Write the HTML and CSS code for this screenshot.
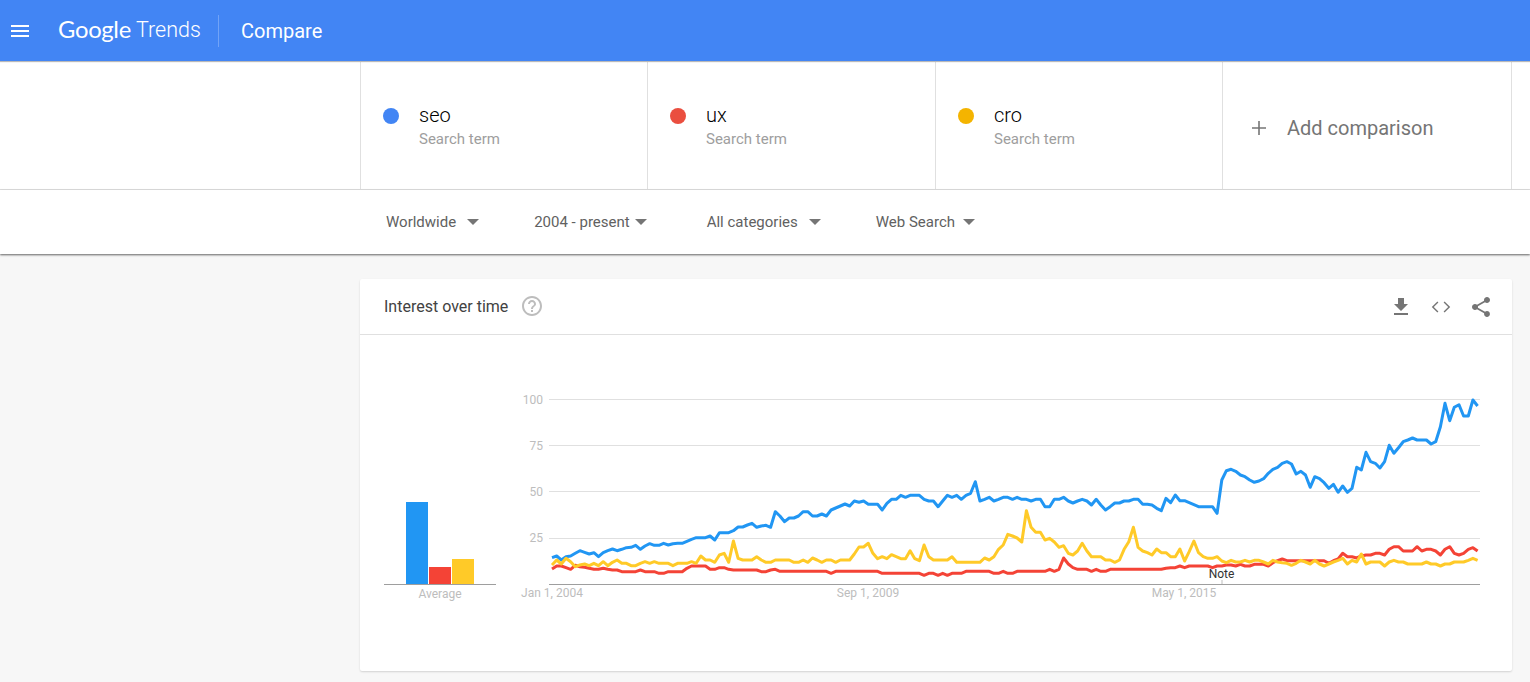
FILE: index.html
```html
<!DOCTYPE html>
<html lang="en">
<head>
<meta charset="utf-8">
<title>Google Trends - Compare</title>
<link rel="stylesheet" href="styles.css">
</head>
<body>
<header class="topbar">
  <button class="menu-btn" aria-label="Menu"><span></span><span></span><span></span></button>
  <div class="logo"><span class="logo-google">Google</span><span class="logo-trends">Trends</span></div>
  <div class="topbar-title">Compare</div>
</header>

<section class="terms">
  <div class="term">
    <span class="dot dot-blue"></span>
    <div class="term-text"><div class="term-name">seo</div><div class="term-kind">Search term</div></div>
  </div>
  <div class="term">
    <span class="dot dot-red"></span>
    <div class="term-text"><div class="term-name">ux</div><div class="term-kind">Search term</div></div>
  </div>
  <div class="term">
    <span class="dot dot-yellow"></span>
    <div class="term-text"><div class="term-name">cro</div><div class="term-kind">Search term</div></div>
  </div>
  <div class="term term-add">
    <svg class="plus" viewBox="0 0 14 14"><path d="M6.2 0h1.6v6.2H14v1.6H7.8V14H6.2V7.8H0V6.2h6.2z"/></svg>
    <span class="add-label">Add comparison</span>
  </div>
</section>

<section class="filters">
  <div class="filter f-geo">Worldwide<i class="caret"></i></div>
  <div class="filter f-time">2004 - present<i class="caret"></i></div>
  <div class="filter f-cat">All categories<i class="caret"></i></div>
  <div class="filter f-prop">Web Search<i class="caret"></i></div>
</section>

<main class="content">
  <article class="card">
    <div class="card-head">
      <h2 class="card-title">Interest over time</h2>
      <svg class="help" viewBox="0 0 24 24"><path d="M11 18h2v-2h-2v2zm1-16C6.48 2 2 6.48 2 12s4.48 10 10 10 10-4.48 10-10S17.52 2 12 2zm0 18c-4.41 0-8-3.59-8-8s3.59-8 8-8 8 3.59 8 8-3.59 8-8 8zm0-14c-2.21 0-4 1.79-4 4h2c0-1.1.9-2 2-2s2 .9 2 2c0 2-3 1.75-3 5h2c0-2.25 3-2.5 3-5 0-2.21-1.79-4-4-4z"/></svg>
      <div class="card-actions">
        <svg class="action" viewBox="0 0 24 24"><path d="M19 9h-4V3H9v6H5l7 7 7-7zM5 18v2h14v-2H5z"/></svg>
        <svg class="action" viewBox="0 0 24 24"><path d="M9.4 16.6L4.8 12l4.6-4.6L8.4 6.4 2.8 12l5.6 5.6 1-1zm5.2 0l4.6-4.6-4.6-4.6 1-1 5.6 5.6-5.6 5.6-1-1z"/></svg>
        <svg class="action" viewBox="0 0 24 24"><path d="M18 16.08c-.76 0-1.44.3-1.96.77L8.91 12.7c.05-.23.09-.46.09-.7s-.04-.47-.09-.7l7.05-4.11c.54.5 1.25.81 2.04.81 1.66 0 3-1.34 3-3s-1.34-3-3-3-3 1.34-3 3c0 .24.04.47.09.7L8.04 9.81C7.5 9.31 6.79 9 6 9c-1.66 0-3 1.34-3 3s1.34 3 3 3c.79 0 1.5-.31 2.04-.81l7.12 4.16c-.05.21-.08.43-.08.65 0 1.61 1.31 2.92 2.92 2.92 1.61 0 2.92-1.31 2.92-2.92s-1.31-2.92-2.92-2.92z"/></svg>
      </div>
    </div>
    <svg class="chart" viewBox="360 335 1152 336" width="1152" height="336">
      <rect class="bar-blue" x="406" y="502" width="22" height="82"/>
      <rect class="bar-red" x="429" y="567" width="22" height="17"/>
      <rect class="bar-yellow" x="452" y="559" width="22" height="25"/>
      <line class="axis" x1="384" y1="584.5" x2="496" y2="584.5"/>
      <text class="tick tick-mid" x="440" y="598">Average</text>

      <line class="grid" x1="549" y1="399.5" x2="1480" y2="399.5"/>
      <line class="grid" x1="549" y1="445.5" x2="1480" y2="445.5"/>
      <line class="grid" x1="549" y1="491.5" x2="1480" y2="491.5"/>
      <line class="grid" x1="549" y1="538.5" x2="1480" y2="538.5"/>
      <line class="axis" x1="549" y1="584.5" x2="1480" y2="584.5"/>
      <text class="tick tick-end" x="543" y="404">100</text>
      <text class="tick tick-end" x="543" y="450">75</text>
      <text class="tick tick-end" x="543" y="496">50</text>
      <text class="tick tick-end" x="543" y="542">25</text>
      <text class="tick tick-mid" x="552" y="597">Jan 1, 2004</text>
      <text class="tick tick-mid" x="868" y="597">Sep 1, 2009</text>
      <text class="tick tick-mid" x="1184" y="597">May 1, 2015</text>

      <polyline id="line-seo" class="line line-blue"/>
      <polyline id="line-ux" class="line line-red"/>
      <polyline id="line-cro" class="line line-yellow"/>

      <line class="note-tick" x1="1222" y1="580" x2="1222" y2="584"/>
      <text class="note" x="1221.5" y="578">Note</text>
    </svg>
  </article>
</main>
<script src="chart.js"></script>
</body>
</html>
```
FILE: styles.css
```css
* { box-sizing: border-box; }
html, body { margin: 0; height: 100%; overflow: hidden; }
body { background: #f7f7f7; font-family: Roboto, "Liberation Sans", sans-serif; color: #212121; }

.topbar { height: 61px; background: #4285f4; display: flex; align-items: center; color: #fff; position: relative; z-index: 2; box-shadow: 0 1px 1px rgba(0,0,0,.25); }
.menu-btn { width: 18px; height: 12px; margin-left: 11px; padding: 0; border: 0; background: none; display: flex; flex-direction: column; justify-content: space-between; }
.menu-btn span { display: block; height: 2px; background: #fff; }
.logo { margin-left: 29px; width: 161px; height: 32px; display: flex; align-items: center; border-right: 1px solid rgba(255,255,255,.25); padding-bottom: 3px; }
.logo-google { font: 400 23.8px Lato, Roboto, sans-serif; letter-spacing: -.3px; }
.logo-trends { font: 300 21.5px Roboto, sans-serif; margin-left: 5px; }
.topbar-title { margin-left: 22px; font-size: 20px; }

.terms { height: 128px; background: #fff; border-bottom: 1px solid #e0e0e0; padding-left: 360px; display: grid; grid-template-columns: 287px 288px 287px 290px; margin-top: 1px; }
.term { border-left: 1px solid #e0e0e0; display: flex; align-items: center; padding-left: 22px; }
.term:last-child { border-right: 1px solid #e0e0e0; }
.term-add { padding-left: 29px; padding-top: 4px; }
.dot { width: 16px; height: 16px; border-radius: 50%; margin-right: 20px; margin-top: -20px; flex: none; }
.dot-blue { background: #4285f4; }
.dot-red { background: #ea4e3f; }
.dot-yellow { background: #f4b400; }
.term-text { margin-top: 2px; }
.term-name { font-size: 20px; font-weight: 300; line-height: 22px; color: #000; }
.term-kind { font-size: 15px; line-height: 20px; color: #9e9e9e; margin-top: 3px; }
.plus { width: 14px; height: 14px; fill: #757575; margin-right: 21px; }
.add-label { font-size: 20px; color: #757575; }

.filters { height: 64px; background: #fff; padding-left: 386px; display: flex; align-items: center; box-shadow: 0 1px 2px rgba(0,0,0,.6); position: relative; font-size: 15px; color: #616161; }
.filter { display: flex; align-items: center; }
.caret { width: 0; height: 0; margin-left: 11px; border-left: 6px solid transparent; border-right: 6px solid transparent; border-top: 6px solid #757575; }
.f-time .caret { margin-left: 5px; }
.f-prop .caret { margin-left: 8px; }
.f-geo { margin-right: 55px; }
.f-time { margin-right: 60px; }
.f-cat { margin-right: 55px; }

.content { padding: 25px 0 0 360px; }
.card { width: 1152px; height: 392px; background: #fff; border-radius: 2px; box-shadow: 0 1px 2px rgba(0,0,0,.15); }
.card-head { height: 56px; border-bottom: 1px solid #e0e0e0; display: flex; align-items: center; padding: 0 19px 2px 24px; }
.card-title { margin: 2px 0 0; font-size: 16px; font-weight: 400; color: #424242; }
.help { width: 24px; height: 24px; fill: #bdbdbd; margin-left: 12px; }
.card-actions { margin: 2px 0 0 auto; display: flex; gap: 16px; }
.action { width: 24px; height: 24px; fill: #757575; }

.chart { display: block; }
.grid { stroke: #e0e0e0; stroke-width: 1; }
.axis { stroke: #9e9e9e; stroke-width: 1; }
.tick { font: 12px Roboto, sans-serif; fill: #bdbdbd; }
.tick-end { text-anchor: end; }
.tick-mid { text-anchor: middle; }
.bar-blue { fill: #2196f3; }
.bar-red { fill: #f44336; }
.bar-yellow { fill: #ffca28; }
.line { fill: none; stroke-width: 3; stroke-linejoin: round; }
.line-blue { stroke: #2196f3; }
.line-red { stroke: #f44336; }
.line-yellow { stroke: #ffca28; }
.note { font: 12px Roboto, sans-serif; fill: #333; text-anchor: middle; }
.note-tick { stroke: #bdbdbd; }
```
FILE: chart.js
```js
// Monthly interest samples, measured as pixel rows at 3x (base + value / 3).
var series = {
  'line-seo': [
    [380, [533,528,540,530,528,520,512,517,522,518,530,518,512,507,512,508,503,502,496,508,498,491,496,496,490,495,491,490,490,484,478,473,473,473,468,480,458,458,458,452,441,441,435,430,442]],
    [440, [258,256,262,215,228,245,234,234,228,215,215,228,228,222,228,210,204,198,192,198,183,187,183,193,193,193,210,190,178,178,166,172,166,166,166,178,183,183,200,183,166,172,166,178,166,160,125,183,178,172,183,178,172,172,178,172,178,178,183,178,178,200,200,178,178,172,183,189,183,178,183,195,178,195,210,200,189,189,183,183,178,178,193,193,195,205]],
    [380, [392,355,368,345,362,362,368,374,380,380,380,380,400,300,272,268,274,285,290,300,307,303,296,280,268,262,250,245,252,282,274,285,322,290,296,308,325,313,337,318,337,325,262,270,217,245,250,264,245,196,220,203,185,180,174,180,180,180,192,185,140,70,122,82,74,108,108,60,78]]
  ],
  'line-ux': [
    [380, [567,558,558,563,568,556,560,562,565,568,568,565,568,570,570,575,575,575,575,570,575,575,575,580,580,575,575,575,575,565,558,558,558,558,568,568,563,563,568,570,570,570,570,570,570,575,575,570]],
    [440, [388,394,394,394,394,394,394,394,394,394,394,394,400,394,394,394,394,394,394,394,394,394,394,400,400,400,400,400,400,400,400,400,406,400,400,406,400,406,400,400,400,394,394,394,394,394,394,400,400,394,400,400,394,394,394,394,394,394,394,388,394,388,354,372,383,388,388,388,394,388,394,394,388,388,388,388,388,388,388,388,388,388,388]],
    [530, [118,115,113,113,108,113,108,108,108,108,108,113,108,108,105,105,108,103,108,108,103,103,103,108,98,92,87,92,92,92,92,92,92,92,92,92,100,92,87,70,80,80,84,78,75,75,70,70,75,58,50,50,63,63,63,50,63,58,58,63,75,58,50,70,75,70,58,53,63]]
  ],
  'line-cro': [
    [500, [195,180,192,175,185,200,195,192,197,190,197,185,197,187,180,190,190,197,197,190,185,190,185,190,190,190,197,190,190,190,185,190,168,180,180,187,165,160,187,123,175,180,180,180,170,180,187,187]],
    [440, [360,360,360,360,367,367,360,367,354,360,367,360,360,367,360,360,360,342,321,321,310,340,356,350,356,344,350,356,356,332,356,362,315,350,360,360,360,360,350,367,367,367,367,367,367,354,360,350,328,315,283,288,294,306,212,262,277,277,300,295,306,322,317,340,345,333,310,333,350,350,350,360,360,367,360,328,305,262,322,333,338,345,327]],
    [380, [518,518,530,530,507,543,515,483,518,530,535,535,530,543,548,541,546,546,541,546,541,541,546,552,541,546,548,550,556,550,541,546,552,541,552,558,552,546,541,535,552,541,546,522,552,546,546,546,558,546,541,546,546,552,552,552,552,546,552,552,558,552,552,546,546,546,541,535,541]]
  ]
};

Object.keys(series).forEach(function (id) {
  var ys = [];
  series[id].forEach(function (seg) {
    seg[1].forEach(function (v) { ys.push(seg[0] + v / 3); });
  });
  var step = 925.6 / (ys.length - 1);
  var pts = ys.map(function (y, i) {
    return (552 + i * step).toFixed(1) + ',' + y.toFixed(1);
  });
  document.getElementById(id).setAttribute('points', pts.join(' '));
});
```
